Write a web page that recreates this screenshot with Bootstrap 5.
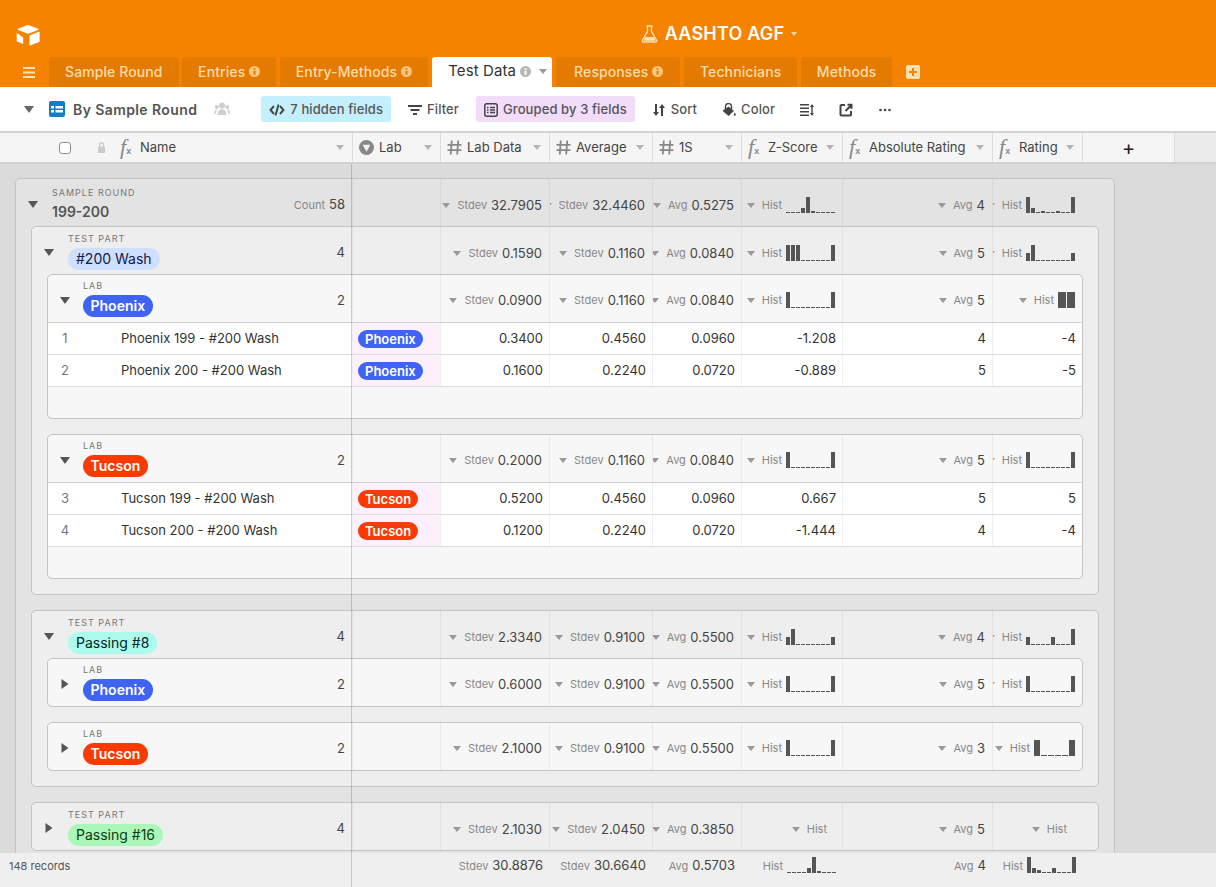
<!doctype html>
<html lang="en">
<head>
<meta charset="utf-8">
<title>AASHTO AGF</title>
<link href="https://cdn.jsdelivr.net/npm/bootstrap@5.3.0/dist/css/bootstrap.min.css" rel="stylesheet">
<style>
html,body{height:100%;overflow:hidden}
body{font-family:Inter,"Liberation Sans",sans-serif;font-size:13px;color:#333;background:#d9d9d9}
.app{height:887px;position:relative}
.topbar{background:#f58300;height:87px;position:relative}
.logo{position:absolute;left:16px;top:24px;width:25px;height:22px}
.basetitle{height:57px;color:#fff;font-size:18px;font-weight:600;letter-spacing:.2px;padding:10px 0 0 222px}
.basetitle svg{width:17px;height:18px;margin-right:7px}
.tcaret{border:3.5px solid transparent;border-top:4px solid #fbd9a5;border-bottom:0;margin-left:7px}
.tabsrow{height:30px;padding-left:23px}
.burger{width:12px;height:11px;margin-right:14px}
.tabx{height:30px;background:#e57a00;color:#fcdcab;font-size:14px;font-weight:500;border-radius:3px 3px 0 0;padding:0 16px 1px;margin-right:3.5px;white-space:nowrap;letter-spacing:.1px}
.tabx.on{background:#fff;color:#333;font-weight:400;font-size:15px;margin-left:.5px;margin-right:4px}
.tabx.resp{padding:0 17px 1px 18px}
.ii{width:11px;height:11px;margin-left:4px;color:#fbc77e}
.on .ii{color:#b8b8b8}
.on .dn{margin-left:8px;margin-right:-11px}
.plusb{width:14px;height:14px;margin-left:10px;color:#fde0b0}
.toolbar{height:44px;background:#fff;padding-left:24px;color:#555;font-weight:500}
.dn{display:inline-block;flex:none;width:0;height:0;border:4px solid transparent;border-top:5px solid #999;border-bottom:0}
.dn.big{border-width:5px;border-top-width:7px;border-top-color:#666;margin-right:15px}
.viewname{font-size:14px;font-weight:600;color:#555;margin:0 17px 0 8px;letter-spacing:.4px}
.tb{width:16px;height:16px;flex:none}
.tb.ppl{margin-right:31px}
.tbb{height:26px;padding:1px 8px 0;border-radius:3px;margin-right:9px;font-size:13px;color:#555;white-space:nowrap;letter-spacing:.1px}
.tbb svg{width:14px;height:14px;margin-right:5px;flex:none}
.tbb svg.wide{width:16px;margin-right:5px}
.tbb svg.nogap{margin:0}
.pill-b{background:#c4f0fd}
.pill-p{background:#f1dcf9}
.headrow{height:33px;background:#f5f5f5;border-top:2px solid #d2d2d2;border-bottom:2px solid #d2d2d2}
.cols{display:grid;grid-template-columns:var(--nw) 88px 109px 103px 89px 101px 150px 90px}
.hc{border-left:1px solid #ddd;padding:0 6px;color:#444;white-space:nowrap;font-size:13px}
.hc.first{border-left:0;padding-left:59px}
.hc .dn{margin-left:auto;margin-right:2px;border-top-color:#b5b5b5}
.hc svg{width:15px;height:15px;margin-right:5px;color:#888;flex:none}
.hc svg.lock{margin:0 14px 0 26px;width:9px;height:11px;color:#ccc}
.hchk{width:12px;height:12px;flex:none;border-color:#8a8a8a;border-radius:2px}
.fx{display:inline-block;width:20px;flex:none;font-family:"Liberation Serif",serif;font-style:italic;font-size:22px;color:#888;line-height:1;position:relative;top:-1px}
.fx sub{font-size:9px;font-family:"Liberation Sans",sans-serif;font-weight:700;font-style:normal;bottom:-.1em}
.addcol{width:93px;border-left:1px solid #ddd;border-right:1px solid #ddd;background:#f5f5f5;font-size:20px;color:#222;line-height:1}
.headfill{background:#ebebeb}
.scroller{height:689px;overflow:hidden;padding:14px 0 0 15px;background:#dbdbdb}
.grp{border:1px solid #c4c4c4;border-radius:5px;overflow:hidden}
.g1{width:1100px;background:#e3e3e3;--nw:336px;padding-bottom:15px}
.g2{background:#eeeeee;--nw:320px;margin:0 15px 15px}
.g3{background:#f7f7f7;--nw:304px;margin:0 15px 15px}
.grh{height:47px}
.g3 .grh.openh{height:48px;border-bottom:1px solid #cfcfcf}
.ce{padding:6px 7px 0 0;border-left:1px solid rgba(0,0,0,.05);overflow:hidden;white-space:nowrap}
.g3 .ce{padding-top:4px}
.cfirst{padding:0 7px 0 12px;border-right:0;overflow:hidden}
.lb{color:#888;font-size:11px;flex:none}
.vl{color:#444;font-size:13px;margin-left:4px;flex:none}
.ce .dn{margin-right:7px}
.hs{width:49px;height:16px;margin-left:4px;flex:none;color:#555;margin-top:-2px}
.hs.w2{width:17px}
.hs.w3{width:41px}
.ce.pr8{padding-right:15px}
.tri{margin:2px 14px 0 0;flex:none;width:10px;height:10px;color:#555}
.g3 .tri{margin-right:13px}
.gt{line-height:1.1;padding-top:2px}
.g3 .gt{padding:0 0 1px}
.cap{font-size:9px;letter-spacing:1px;color:#777;text-transform:uppercase;margin-bottom:4px;line-height:12px}
.gv{font-size:14px;font-weight:600;color:#555;line-height:17px;margin-top:4px}
.g2 .cap,.g3 .cap{margin-bottom:3px}
.chip{display:inline-block;border-radius:11px;height:22px;line-height:22px;padding:0 8px;font-size:14px;white-space:nowrap}
.chip.c-p,.chip.c-t{padding:0 7.5px}
.c-w{background:#cfdfff;color:#102046}
.c-8{background:#acfbec;color:#012524}
.c-16{background:#abf7b9;color:#0b3b12}
.c-p{background:#3f63f3;color:#fff;font-weight:600}
.c-t{background:#f83b05;color:#fff;font-weight:600}
.chips{display:inline-block;border-radius:9px;height:18px;line-height:18px;padding:0 7px;font-size:13px;font-weight:600;color:#fff;white-space:nowrap}
.rw{background:#fff;height:32px;border-bottom:1px solid #ddd;color:#333}
.rnum{width:26px;color:#777;text-align:center;margin-right:43px;margin-left:4px;flex:none}
.rc{padding:0 6px 0 5px;border-left:1px solid #f0f0f0}
.labc{background:#fdf0fd}
.rw .cfirst{padding:0;font-size:13px}
.emp{height:31px}
.foot{height:34px;background:#efefef;--nw:352px;position:relative;padding-bottom:4px}
.foot .ce{border:0;padding:0 6px 4px 0}
.recs{font-size:11px;color:#555;padding:0 0 4px 9px}
.vline{position:absolute;left:351px;top:164px;bottom:0;width:1px;background:rgba(0,0,0,.17)}
</style>
</head>
<body>
<svg width="0" height="0" class="position-absolute">
<defs>
<symbol id="info" viewBox="0 0 11 11"><path fill="currentColor" fill-rule="evenodd" d="M5.5 0a5.500 5.500 0 1 1 0 11a5.500 5.500 0 0 1 0-11zM4.500 2.200v1.500h2v-1.500zM4.500 4.700v4h2v-4z"/></symbol>
<symbol id="hash" viewBox="0 0 14 14"><path fill="none" stroke="currentColor" stroke-width="1.700" d="M4.500 0.500l-1 13M10.500 0.500l-1 13M0.500 4.500h13M0.500 9.500h13"/></symbol>
<symbol id="tdn" viewBox="0 0 10 10"><path fill="currentColor" d="M0 2h10l-5 7z"/></symbol>
<symbol id="trt" viewBox="0 0 10 10"><path fill="currentColor" d="M1.500 0v10l7-5z"/></symbol>
<symbol id="hp" viewBox="0 0 49 16"><path fill="currentColor" d="M0 0h4v16h-4zM45 0h4v16h-4z"/><path stroke="currentColor" stroke-dasharray="4 1" d="M5 15.500h40"/></symbol>
<symbol id="h1" viewBox="0 0 49 16"><path fill="currentColor" d="M15 11h4v5h-4zM20 0h4v16h-4zM25 14h4v2h-4z"/><path stroke="currentColor" stroke-dasharray="4 1" d="M0 15.500h49"/></symbol>
<symbol id="h2" viewBox="0 0 49 16"><path fill="currentColor" d="M0 0h4v16h-4zM5 11h4v5h-4zM15 14h4v2h-4zM30 14h4v2h-4zM45 0h4v16h-4z"/><path stroke="currentColor" stroke-dasharray="4 1" d="M0 15.500h49"/></symbol>
<symbol id="h3" viewBox="0 0 49 16"><path fill="currentColor" d="M0 0h4v16h-4zM5 0h4v16h-4zM10 0h4v16h-4zM45 0h4v16h-4z"/><path stroke="currentColor" stroke-dasharray="4 1" d="M15 15.500h30"/></symbol>
<symbol id="h4" viewBox="0 0 49 16"><path fill="currentColor" d="M0 8h4v8h-4zM5 0h4v16h-4zM45 8h4v8h-4z"/><path stroke="currentColor" stroke-dasharray="4 1" d="M10 15.500h35"/></symbol>
<symbol id="h5" viewBox="0 0 49 16"><path fill="currentColor" d="M0 8h4v8h-4zM25 8h4v8h-4zM45 0h4v16h-4z"/><path stroke="currentColor" stroke-dasharray="4 1" d="M5 15.500h40"/></symbol>
<symbol id="h6" viewBox="0 0 17 16"><path fill="currentColor" d="M0 0h8v16h-8zM9 0h8v16h-8z"/></symbol>
<symbol id="h7" viewBox="0 0 41 16"><path fill="currentColor" d="M0 0h6v16h-6zM35 0h6v16h-6z"/><path stroke="currentColor" stroke-dasharray="6 1" d="M7 15.500h27"/></symbol>
<symbol id="h8" viewBox="0 0 49 16"><path fill="currentColor" d="M20 11h4v5h-4zM25 0h4v16h-4zM30 14h4v2h-4z"/><path stroke="currentColor" stroke-dasharray="4 1" d="M0 15.500h49"/></symbol>
<symbol id="h9" viewBox="0 0 49 16"><path fill="currentColor" d="M0 0h4v16h-4zM5 11h4v5h-4zM10 13h4v3h-4zM25 11h4v5h-4zM45 0h4v16h-4z"/><path stroke="currentColor" stroke-dasharray="4 1" d="M0 15.500h49"/></symbol>
</defs>
</svg>
<div class="app d-flex flex-column">
<header class="topbar">
<svg class="logo" viewBox="0 0 25 22" fill="#fff"><path d="M11 1.200L2 4.800c-.5.200-.5.900 0 1.100l9.300 3.700c.6.200 1.200.2 1.800 0l9-3.700c.5-.2.500-.9 0-1.100l-9-3.600c-.7-.3-1.400-.3-2.100 0z"/><path d="M1.300 9.300c-.3-.2-.6 0-.6.300v7.200c0 .3.200.5.400.6l5.600 2.400c.3.100.5-.1.500-.3v-6.100z"/><path d="M13.500 12v9c0 .3.300.5.600.4l9-3.500c.3-.1.500-.4.500-.7v-9c0-.3-.3-.5-.6-.4l-9 3.500c-.3.100-.5.400-.5.700z"/></svg>
<div class="basetitle d-flex align-items-center justify-content-center">
<svg viewBox="0 0 17 18" fill="none" stroke="#fde3b4" stroke-width="1.300"><path d="M5.500 1h6M6.500 1v5.500L1.500 15c-.5 1 .1 2 1 2h12c.9 0 1.500-1 1-2l-5-8.500V1"/><path fill="#fde3b4" stroke="none" d="M4 12h9l1.500 3.800H2.500z"/></svg>
<span>AASHTO AGF</span><i class="tcaret"></i>
</div>
<nav class="tabsrow d-flex align-items-end">
<svg class="burger align-self-center" viewBox="0 0 12 11" fill="#fde3b4"><path d="M0 0h12v2H0zM0 4.500h12v2H0zM0 9h12v2H0z"/></svg>
<div class="tabx d-flex align-items-center">Sample Round</div>
<div class="tabx d-flex align-items-center">Entries<svg class="ii"><use href="#info"/></svg></div>
<div class="tabx d-flex align-items-center">Entry-Methods<svg class="ii"><use href="#info"/></svg></div>
<div class="tabx on d-flex align-items-center">Test Data<svg class="ii"><use href="#info"/></svg><i class="dn"></i></div>
<div class="tabx resp d-flex align-items-center">Responses<svg class="ii"><use href="#info"/></svg></div>
<div class="tabx d-flex align-items-center">Technicians</div>
<div class="tabx d-flex align-items-center">Methods</div>
<svg class="plusb align-self-center" viewBox="0 0 14 14"><path fill="currentColor" fill-rule="evenodd" d="M2 0h10a2 2 0 0 1 2 2v10a2 2 0 0 1-2 2H2a2 2 0 0 1-2-2V2a2 2 0 0 1 2-2zM6 3v3H3v2h3v3h2V8h3V6H8V3z"/></svg>
</nav>
</header>
<div class="toolbar d-flex align-items-center">
<i class="dn big"></i>
<svg class="tb" viewBox="0 0 16 16"><path fill="#0d7fc9" fill-rule="evenodd" d="M2 0h12a2 2 0 0 1 2 2v12a2 2 0 0 1-2 2H2a2 2 0 0 1-2-2V2a2 2 0 0 1 2-2zM2 5v2.500h3V5zM6.500 5v2.500H14V5zM2 9v2.500h3V9zM6.500 9v2.500H14V9z"/></svg>
<span class="viewname">By Sample Round</span>
<svg class="tb ppl" viewBox="0 0 16 14" fill="#d0d0d0"><circle cx="8" cy="3.500" r="3"/><circle cx="2.800" cy="5" r="2"/><circle cx="13.200" cy="5" r="2"/><path d="M3.500 13c0-3.500 2-6 4.500-6s4.500 2.500 4.500 6zM0 11c0-2 1-3.500 2.800-3.500l.5.100C2.500 8.500 2 10 2 11.500H0zM16 11c0-2-1-3.500-2.800-3.500l-.5.100c.8.900 1.300 2.400 1.300 3.900H16z"/></svg>
<div class="tbb pill-b d-flex align-items-center"><svg class="wide" viewBox="0 0 16 14" fill="none" stroke="#444" stroke-width="1.900"><path d="M5 3L1.500 7 5 11M11 3l3.500 4-3.500 4M9.500 1.500l-3 11"/></svg>7 hidden fields</div>
<div class="tbb d-flex align-items-center"><svg viewBox="0 0 14 14" fill="#444"><path d="M0 2h14v2H0zM2.500 6h9v2h-9zM5 10h4v2H5z"/></svg>Filter</div>
<div class="tbb pill-p d-flex align-items-center"><svg viewBox="0 0 14 14" fill="none" stroke="#444" stroke-width="1.500"><rect x=".8" y=".8" width="12.400" height="12.400" rx="2"/><path d="M3 4.500h1.500M6 4.500h5M3 7h1.500M6 7h5M3 9.500h1.500M6 9.500h5"/></svg>Grouped by 3 fields</div>
<div class="tbb d-flex align-items-center"><svg viewBox="0 0 14 14" fill="#444"><path d="M3 1h2v8h2l-3 4-3-4h2zM9 13h2V5h2l-3-4-3 4h2z"/></svg>Sort</div>
<div class="tbb d-flex align-items-center"><svg viewBox="0 0 14 14"><path fill="#444" d="M6.500 3.500l5.500 4.300L6.500 13 .5 7.800z"/><path fill="none" stroke="#444" stroke-width="1.400" d="M3.500 6V3.500a3 3 0 0 1 6 0V6"/><path fill="#444" d="M12.800 9.500c.5.800 1 1.500 1 2.200 0 .6-.4 1-1 1s-1-.4-1-1c0-.7.500-1.400 1-2.200z"/></svg>Color</div>
<div class="tbb d-flex align-items-center"><svg class="nogap" viewBox="0 0 14 14" fill="#444"><path d="M0 1h9v1.500H0zM0 4.500h9V6H0zM0 8h9v1.500H0zM0 11.500h9V13H0zM10 4l2-3 2 3h-1.300v6H14l-2 3-2-3h1.300V4z"/></svg></div>
<div class="tbb d-flex align-items-center"><svg class="nogap" viewBox="0 0 14 14" fill="none" stroke="#444" stroke-width="2"><path d="M6 2H2.500a1 1 0 0 0-1 1v8.500a1 1 0 0 0 1 1H11a1 1 0 0 0 1-1V8M6.500 8L11.500 3M8.500 1.800h4v4"/></svg></div>
<div class="tbb d-flex align-items-center"><svg class="nogap" viewBox="0 0 14 14" fill="#444"><circle cx="2.500" cy="7" r="1.300"/><circle cx="7" cy="7" r="1.300"/><circle cx="11.500" cy="7" r="1.300"/></svg></div>
</div>
<div class="headrow d-flex">
<div class="cols" style="--nw:352px">
<div class="hc first d-flex align-items-center"><input class="form-check-input m-0 hchk" type="checkbox" aria-label="Select all"><svg class="lock" viewBox="0 0 14 14" preserveAspectRatio="none"><path fill="currentColor" d="M3 6V4a4 4 0 0 1 8 0v2h1.500v8h-11V6zM5 6h4V4a2 2 0 0 0-4 0z"/></svg><span class="fx">f<sub>x</sub></span>Name<i class="dn"></i></div>
<div class="hc d-flex align-items-center"><svg viewBox="0 0 14 14"><path fill="currentColor" fill-rule="evenodd" d="M7 0a7 7 0 1 1 0 14A7 7 0 0 1 7 0zM3.500 4.500L7 11l3.500-6.500z"/></svg>Lab<i class="dn"></i></div>
<div class="hc d-flex align-items-center"><svg><use href="#hash"/></svg>Lab Data<i class="dn"></i></div>
<div class="hc d-flex align-items-center"><svg><use href="#hash"/></svg>Average<i class="dn"></i></div>
<div class="hc d-flex align-items-center"><svg><use href="#hash"/></svg>1S<i class="dn"></i></div>
<div class="hc d-flex align-items-center"><span class="fx">f<sub>x</sub></span>Z-Score<i class="dn"></i></div>
<div class="hc d-flex align-items-center"><span class="fx">f<sub>x</sub></span>Absolute Rating<i class="dn"></i></div>
<div class="hc d-flex align-items-center"><span class="fx">f<sub>x</sub></span>Rating<i class="dn"></i></div>
</div>
<div class="addcol d-flex align-items-center justify-content-center">+</div>
<div class="headfill flex-grow-1"></div>
</div>
<main class="scroller">
<section class="grp g1">
<div class="grh cols">
<div class="cfirst d-flex align-items-center"><svg class="tri"><use href="#tdn"/></svg><div class="gt flex-grow-1"><div class="cap">Sample Round</div><div class="gv">199-200</div></div><div class="pt-1"><span class="lb">Count</span><span class="vl">58</span></div></div>
<div class="ce"></div>
<div class="ce d-flex align-items-center justify-content-end"><i class="dn"></i><span class="lb">Stdev</span><span class="vl">32.7905</span></div>
<div class="ce d-flex align-items-center justify-content-end"><i class="dn"></i><span class="lb">Stdev</span><span class="vl">32.4460</span></div>
<div class="ce d-flex align-items-center justify-content-end"><i class="dn"></i><span class="lb">Avg</span><span class="vl">0.5275</span></div>
<div class="ce d-flex align-items-center justify-content-end"><i class="dn"></i><span class="lb">Hist</span><svg class="hs"><use href="#h1"/></svg></div>
<div class="ce d-flex align-items-center justify-content-end"><i class="dn"></i><span class="lb">Avg</span><span class="vl">4</span></div>
<div class="ce d-flex align-items-center justify-content-end"><i class="dn"></i><span class="lb">Hist</span><svg class="hs"><use href="#h2"/></svg></div>
</div>
<section class="grp g2">
<div class="grh cols">
<div class="cfirst d-flex align-items-center"><svg class="tri"><use href="#tdn"/></svg><div class="gt flex-grow-1"><div class="cap">Test Part</div><span class="chip c-w">#200 Wash</span></div><div class="pt-1 vl">4</div></div>
<div class="ce"></div>
<div class="ce d-flex align-items-center justify-content-end"><i class="dn"></i><span class="lb">Stdev</span><span class="vl">0.1590</span></div>
<div class="ce d-flex align-items-center justify-content-end"><i class="dn"></i><span class="lb">Stdev</span><span class="vl">0.1160</span></div>
<div class="ce d-flex align-items-center justify-content-end"><i class="dn"></i><span class="lb">Avg</span><span class="vl">0.0840</span></div>
<div class="ce d-flex align-items-center justify-content-end"><i class="dn"></i><span class="lb">Hist</span><svg class="hs"><use href="#h3"/></svg></div>
<div class="ce d-flex align-items-center justify-content-end"><i class="dn"></i><span class="lb">Avg</span><span class="vl">5</span></div>
<div class="ce d-flex align-items-center justify-content-end"><i class="dn"></i><span class="lb">Hist</span><svg class="hs"><use href="#h4"/></svg></div>
</div>
<section class="grp g3">
<div class="grh openh cols">
<div class="cfirst d-flex align-items-center"><svg class="tri"><use href="#tdn"/></svg><div class="gt flex-grow-1"><div class="cap">Lab</div><span class="chip c-p">Phoenix</span></div><div class="pt-1 vl">2</div></div>
<div class="ce"></div>
<div class="ce d-flex align-items-center justify-content-end"><i class="dn"></i><span class="lb">Stdev</span><span class="vl">0.0900</span></div>
<div class="ce d-flex align-items-center justify-content-end"><i class="dn"></i><span class="lb">Stdev</span><span class="vl">0.1160</span></div>
<div class="ce d-flex align-items-center justify-content-end"><i class="dn"></i><span class="lb">Avg</span><span class="vl">0.0840</span></div>
<div class="ce d-flex align-items-center justify-content-end"><i class="dn"></i><span class="lb">Hist</span><svg class="hs"><use href="#hp"/></svg></div>
<div class="ce d-flex align-items-center justify-content-end"><i class="dn"></i><span class="lb">Avg</span><span class="vl">5</span></div>
<div class="ce d-flex align-items-center justify-content-end"><i class="dn"></i><span class="lb">Hist</span><svg class="hs w2"><use href="#h6"/></svg></div>
</div>
<div class="rw cols">
<div class="cfirst d-flex align-items-center"><span class="rnum">1</span>Phoenix 199 - #200 Wash</div>
<div class="rc labc d-flex align-items-center"><span class="chips c-p">Phoenix</span></div>
<div class="rc d-flex align-items-center justify-content-end">0.3400</div>
<div class="rc d-flex align-items-center justify-content-end">0.4560</div>
<div class="rc d-flex align-items-center justify-content-end">0.0960</div>
<div class="rc d-flex align-items-center justify-content-end">-1.208</div>
<div class="rc d-flex align-items-center justify-content-end">4</div>
<div class="rc d-flex align-items-center justify-content-end">-4</div>
</div>
<div class="rw cols">
<div class="cfirst d-flex align-items-center"><span class="rnum">2</span>Phoenix 200 - #200 Wash</div>
<div class="rc labc d-flex align-items-center"><span class="chips c-p">Phoenix</span></div>
<div class="rc d-flex align-items-center justify-content-end">0.1600</div>
<div class="rc d-flex align-items-center justify-content-end">0.2240</div>
<div class="rc d-flex align-items-center justify-content-end">0.0720</div>
<div class="rc d-flex align-items-center justify-content-end">-0.889</div>
<div class="rc d-flex align-items-center justify-content-end">5</div>
<div class="rc d-flex align-items-center justify-content-end">-5</div>
</div>
<div class="emp"></div>
</section>
<section class="grp g3">
<div class="grh openh cols">
<div class="cfirst d-flex align-items-center"><svg class="tri"><use href="#tdn"/></svg><div class="gt flex-grow-1"><div class="cap">Lab</div><span class="chip c-t">Tucson</span></div><div class="pt-1 vl">2</div></div>
<div class="ce"></div>
<div class="ce d-flex align-items-center justify-content-end"><i class="dn"></i><span class="lb">Stdev</span><span class="vl">0.2000</span></div>
<div class="ce d-flex align-items-center justify-content-end"><i class="dn"></i><span class="lb">Stdev</span><span class="vl">0.1160</span></div>
<div class="ce d-flex align-items-center justify-content-end"><i class="dn"></i><span class="lb">Avg</span><span class="vl">0.0840</span></div>
<div class="ce d-flex align-items-center justify-content-end"><i class="dn"></i><span class="lb">Hist</span><svg class="hs"><use href="#hp"/></svg></div>
<div class="ce d-flex align-items-center justify-content-end"><i class="dn"></i><span class="lb">Avg</span><span class="vl">5</span></div>
<div class="ce d-flex align-items-center justify-content-end"><i class="dn"></i><span class="lb">Hist</span><svg class="hs"><use href="#hp"/></svg></div>
</div>
<div class="rw cols">
<div class="cfirst d-flex align-items-center"><span class="rnum">3</span>Tucson 199 - #200 Wash</div>
<div class="rc labc d-flex align-items-center"><span class="chips c-t">Tucson</span></div>
<div class="rc d-flex align-items-center justify-content-end">0.5200</div>
<div class="rc d-flex align-items-center justify-content-end">0.4560</div>
<div class="rc d-flex align-items-center justify-content-end">0.0960</div>
<div class="rc d-flex align-items-center justify-content-end">0.667</div>
<div class="rc d-flex align-items-center justify-content-end">5</div>
<div class="rc d-flex align-items-center justify-content-end">5</div>
</div>
<div class="rw cols">
<div class="cfirst d-flex align-items-center"><span class="rnum">4</span>Tucson 200 - #200 Wash</div>
<div class="rc labc d-flex align-items-center"><span class="chips c-t">Tucson</span></div>
<div class="rc d-flex align-items-center justify-content-end">0.1200</div>
<div class="rc d-flex align-items-center justify-content-end">0.2240</div>
<div class="rc d-flex align-items-center justify-content-end">0.0720</div>
<div class="rc d-flex align-items-center justify-content-end">-1.444</div>
<div class="rc d-flex align-items-center justify-content-end">4</div>
<div class="rc d-flex align-items-center justify-content-end">-4</div>
</div>
<div class="emp"></div>
</section>
</section>
<section class="grp g2">
<div class="grh cols">
<div class="cfirst d-flex align-items-center"><svg class="tri"><use href="#tdn"/></svg><div class="gt flex-grow-1"><div class="cap">Test Part</div><span class="chip c-8">Passing #8</span></div><div class="pt-1 vl">4</div></div>
<div class="ce"></div>
<div class="ce d-flex align-items-center justify-content-end"><i class="dn"></i><span class="lb">Stdev</span><span class="vl">2.3340</span></div>
<div class="ce d-flex align-items-center justify-content-end"><i class="dn"></i><span class="lb">Stdev</span><span class="vl">0.9100</span></div>
<div class="ce d-flex align-items-center justify-content-end"><i class="dn"></i><span class="lb">Avg</span><span class="vl">0.5500</span></div>
<div class="ce d-flex align-items-center justify-content-end"><i class="dn"></i><span class="lb">Hist</span><svg class="hs"><use href="#h4"/></svg></div>
<div class="ce d-flex align-items-center justify-content-end"><i class="dn"></i><span class="lb">Avg</span><span class="vl">4</span></div>
<div class="ce d-flex align-items-center justify-content-end"><i class="dn"></i><span class="lb">Hist</span><svg class="hs"><use href="#h5"/></svg></div>
</div>
<section class="grp g3">
<div class="grh cols">
<div class="cfirst d-flex align-items-center"><svg class="tri"><use href="#trt"/></svg><div class="gt flex-grow-1"><div class="cap">Lab</div><span class="chip c-p">Phoenix</span></div><div class="pt-1 vl">2</div></div>
<div class="ce"></div>
<div class="ce d-flex align-items-center justify-content-end"><i class="dn"></i><span class="lb">Stdev</span><span class="vl">0.6000</span></div>
<div class="ce d-flex align-items-center justify-content-end"><i class="dn"></i><span class="lb">Stdev</span><span class="vl">0.9100</span></div>
<div class="ce d-flex align-items-center justify-content-end"><i class="dn"></i><span class="lb">Avg</span><span class="vl">0.5500</span></div>
<div class="ce d-flex align-items-center justify-content-end"><i class="dn"></i><span class="lb">Hist</span><svg class="hs"><use href="#hp"/></svg></div>
<div class="ce d-flex align-items-center justify-content-end"><i class="dn"></i><span class="lb">Avg</span><span class="vl">5</span></div>
<div class="ce d-flex align-items-center justify-content-end"><i class="dn"></i><span class="lb">Hist</span><svg class="hs"><use href="#hp"/></svg></div>
</div>
</section>
<section class="grp g3">
<div class="grh cols">
<div class="cfirst d-flex align-items-center"><svg class="tri"><use href="#trt"/></svg><div class="gt flex-grow-1"><div class="cap">Lab</div><span class="chip c-t">Tucson</span></div><div class="pt-1 vl">2</div></div>
<div class="ce"></div>
<div class="ce d-flex align-items-center justify-content-end"><i class="dn"></i><span class="lb">Stdev</span><span class="vl">2.1000</span></div>
<div class="ce d-flex align-items-center justify-content-end"><i class="dn"></i><span class="lb">Stdev</span><span class="vl">0.9100</span></div>
<div class="ce d-flex align-items-center justify-content-end"><i class="dn"></i><span class="lb">Avg</span><span class="vl">0.5500</span></div>
<div class="ce d-flex align-items-center justify-content-end"><i class="dn"></i><span class="lb">Hist</span><svg class="hs"><use href="#hp"/></svg></div>
<div class="ce d-flex align-items-center justify-content-end"><i class="dn"></i><span class="lb">Avg</span><span class="vl">3</span></div>
<div class="ce d-flex align-items-center justify-content-end"><i class="dn"></i><span class="lb">Hist</span><svg class="hs w3"><use href="#h7"/></svg></div>
</div>
</section>
</section>
<section class="grp g2">
<div class="grh cols">
<div class="cfirst d-flex align-items-center"><svg class="tri"><use href="#trt"/></svg><div class="gt flex-grow-1"><div class="cap">Test Part</div><span class="chip c-16">Passing #16</span></div><div class="pt-1 vl">4</div></div>
<div class="ce"></div>
<div class="ce d-flex align-items-center justify-content-end"><i class="dn"></i><span class="lb">Stdev</span><span class="vl">2.1030</span></div>
<div class="ce d-flex align-items-center justify-content-end"><i class="dn"></i><span class="lb">Stdev</span><span class="vl">2.0450</span></div>
<div class="ce d-flex align-items-center justify-content-end"><i class="dn"></i><span class="lb">Avg</span><span class="vl">0.3850</span></div>
<div class="ce pr8 d-flex align-items-center justify-content-end"><i class="dn"></i><span class="lb">Hist</span></div>
<div class="ce d-flex align-items-center justify-content-end"><i class="dn"></i><span class="lb">Avg</span><span class="vl">5</span></div>
<div class="ce pr8 d-flex align-items-center justify-content-end"><i class="dn"></i><span class="lb">Hist</span></div>
</div>
</section>
</section>
</main>
<footer class="foot cols">
<div class="recs d-flex align-items-center">148 records</div>
<div class="ce"></div>
<div class="ce d-flex align-items-center justify-content-end"><span class="lb">Stdev</span><span class="vl">30.8876</span></div>
<div class="ce d-flex align-items-center justify-content-end"><span class="lb">Stdev</span><span class="vl">30.6640</span></div>
<div class="ce d-flex align-items-center justify-content-end"><span class="lb">Avg</span><span class="vl">0.5703</span></div>
<div class="ce d-flex align-items-center justify-content-end"><span class="lb">Hist</span><svg class="hs"><use href="#h8"/></svg></div>
<div class="ce d-flex align-items-center justify-content-end"><span class="lb">Avg</span><span class="vl">4</span></div>
<div class="ce d-flex align-items-center justify-content-end"><span class="lb">Hist</span><svg class="hs"><use href="#h9"/></svg></div>
</footer>
<div class="vline"></div>
</div>
<script src="https://cdn.jsdelivr.net/npm/bootstrap@5.3.0/dist/js/bootstrap.bundle.min.js"></script>
</body>
</html>
